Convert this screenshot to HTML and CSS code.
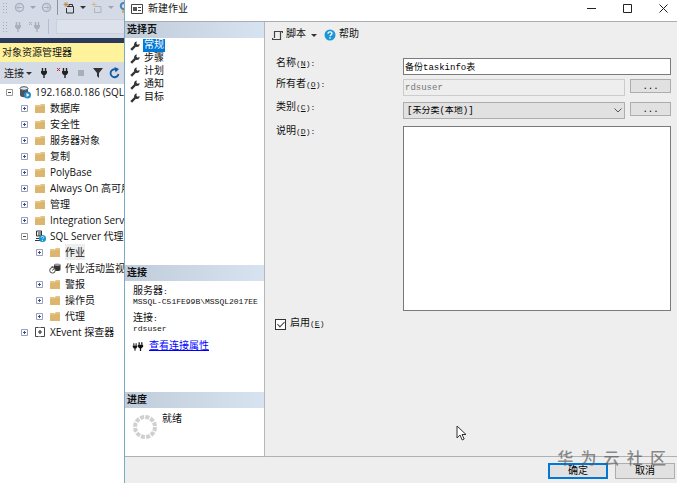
FILE: index.html
```html
<!DOCTYPE html>
<html lang="zh-CN">
<head>
  <meta charset="utf-8">
  <title>新建作业</title>
  <link rel="stylesheet" href="styles.css">
</head>
<body>

  <!-- shared icons -->
  <svg class="defs" width="0" height="0">
    <symbol id="folder" viewBox="0 0 12 11"><path d="M1 2h5l1-1h4v9H1z" fill="#dcb56f"/><path d="M1 3h5l1-1h4" fill="none" stroke="#eed29a"/></symbol>
    <symbol id="plus" viewBox="0 0 7 7"><path d="M.5.5h6v6h-6z" fill="#fff" stroke="#9a9fb5"/><path d="M2 3.5h3M3.5 2v3" stroke="#3b4a9c"/></symbol>
    <symbol id="minus" viewBox="0 0 7 7"><path d="M.5.5h6v6h-6z" fill="#fff" stroke="#999"/><path d="M2 3.5h3" stroke="#444"/></symbol>
    <symbol id="wrench" viewBox="0 0 10 10"><path d="M1.2 8.8L5.5 4.5" stroke="#333" stroke-width="2.4"/><path d="M6.8.6L6.4 2.8l1.2.9 2-.8c.1 2-1.3 3.3-3.2 3L4 3.8C4 1.8 5.3.5 6.8.6z" fill="#333"/></symbol>
    <symbol id="plug" viewBox="0 0 8 12"><path d="M2.5 1v3M5.5 1v3M4 7v4" stroke="currentColor" stroke-width="1.4"/><path d="M1 4h6v2L5.5 8h-3L1 6z" fill="currentColor"/></symbol>
  </svg>

  <div class="explorer">
    <div class="toolbar">
      <div class="tools">
        <span class="grip"></span>
        <svg class="back" width="11" height="11" viewBox="0 0 11 11"><circle cx="5.5" cy="5.5" r="4" fill="none" stroke="#a9afbd" stroke-width="1.5"/><path d="M8 5.5H3.5M5 3.5l-2 2 2 2" fill="none" stroke="#a9afbd"/></svg>
        <i class="caret pale"></i>
        <svg width="11" height="11" viewBox="0 0 11 11"><circle cx="5.5" cy="5.5" r="4" fill="none" stroke="#a9afbd" stroke-width="1.5"/><path d="M3 5.5h4.5M6 3.5l2 2-2 2" fill="none" stroke="#a9afbd"/></svg>
        <span class="sep"></span>
        <svg width="12" height="12" viewBox="0 0 12 12"><path d="M4 4.500h6.500v6.500h-7V6M6 4.500V2.500h3.500v2" fill="none" stroke="#333"/><path d="M3 0v5M.5 2.500h5M1.200.8l3.600 3.400M4.800.8L1.200 4.200" stroke="#bd8530" stroke-width=".8"/></svg>
        <i class="caret"></i>
        <svg width="12" height="12" viewBox="0 0 12 12"><path d="M4 4.500h6v6H3.500V6" fill="none" stroke="#aeb3be"/><path d="M3 0v5M.5 2.500h5" stroke="#d5b98e"/></svg>
        <i class="caret pale"></i>
        <svg width="8" height="11" viewBox="0 0 8 11"><path d="M7 2a3 3 0 1 0 0 4" fill="none" stroke="#4586b7" stroke-width="2"/><path d="M3 8h5v3H3z" fill="#d3ac67"/></svg>
      </div>
      <div class="tools second">
        <span class="grip"></span>
        <svg class="off" width="8" height="12"><use href="#plug"/></svg>
        <svg class="off" width="12" height="12" viewBox="0 0 12 12"><path d="M0 1l3 3M3 1L0 4" stroke="currentColor"/><use href="#plug" x="4" width="8" height="12"/></svg>
        <span class="sep pale"></span>
        <span class="well"></span>
      </div>
    </div>
    <div class="band"></div>
    <h2 class="caption">对象资源管理器</h2>
    <div class="connect">
      <span>连接</span><i class="caret"></i>
      <svg width="8" height="12"><use href="#plug"/></svg>
      <svg width="13" height="12" viewBox="0 0 13 12"><path d="M1 1l3 3M4 1L1 4" stroke="#c22"/><use href="#plug" x="5" width="8" height="12"/></svg>
      <svg width="8" height="8"><path d="M1 1h6v6H1z" fill="#a9aeb8"/></svg>
      <svg width="10" height="10" viewBox="0 0 10 10"><path d="M0 0h10L6 5v5L4 8V5z" fill="#333"/></svg>
      <svg width="11" height="12" viewBox="0 0 11 12"><path d="M9.500 7a4 4 0 1 1-2.500-4.500" fill="none" stroke="#12599f" stroke-width="1.800"/><path d="M5.500 0l4.500 2-3.500 3.500z" fill="#12599f"/></svg>
    </div>
    <ul class="tree">
      <li class="root"><svg width="7" height="7"><use href="#minus"/></svg>
        <svg width="12" height="13" viewBox="0 0 12 13"><path d="M1 2v7c0 3 8 3 8 0V2z" fill="#4c555d"/><ellipse cx="5" cy="2.500" rx="4" ry="1.800" fill="#e4e9ec" stroke="#4c555d"/><circle cx="8.500" cy="9" r="3.500" fill="#228dc9"/><path d="M7.500 7l3 2-3 2z" fill="#fff"/></svg>192.168.0.186 (SQL Server)</li>
      <li><svg width="7" height="7"><use href="#plus"/></svg><svg width="12" height="11"><use href="#folder"/></svg>数据库</li>
      <li><svg width="7" height="7"><use href="#plus"/></svg><svg width="12" height="11"><use href="#folder"/></svg>安全性</li>
      <li><svg width="7" height="7"><use href="#plus"/></svg><svg width="12" height="11"><use href="#folder"/></svg>服务器对象</li>
      <li><svg width="7" height="7"><use href="#plus"/></svg><svg width="12" height="11"><use href="#folder"/></svg>复制</li>
      <li><svg width="7" height="7"><use href="#plus"/></svg><svg width="12" height="11"><use href="#folder"/></svg>PolyBase</li>
      <li><svg width="7" height="7"><use href="#plus"/></svg><svg width="12" height="11"><use href="#folder"/></svg>Always On 高可用性</li>
      <li><svg width="7" height="7"><use href="#plus"/></svg><svg width="12" height="11"><use href="#folder"/></svg>管理</li>
      <li><svg width="7" height="7"><use href="#plus"/></svg><svg width="12" height="11"><use href="#folder"/></svg>Integration Services</li>
      <li><svg width="7" height="7"><use href="#minus"/></svg>
        <svg width="12" height="12" viewBox="0 0 12 12"><path d="M2.500 1h5v5h-5zM1 10.500h7M2 8.500h5" fill="#eee" stroke="#333"/><path d="M4 3h3M4 5h3" stroke="#333"/><circle cx="8.500" cy="8.500" r="3.500" fill="#1694d2"/><path d="M7.200 7.500c0-1.500 2.500-1.500 2.500 0 0 .8-1.200.8-1.200 1.800M8.500 10v1" fill="none" stroke="#fff" stroke-width=".8"/></svg>SQL Server 代理</li>
      <li class="sub"><svg width="7" height="7"><use href="#plus"/></svg><svg width="12" height="11"><use href="#folder"/></svg><span class="picked">作业</span></li>
      <li class="sub leaf"><svg width="12" height="11" viewBox="0 0 12 11"><path d="M5 1.500v5c0 2 6.500 2 6.500 0v-5z" fill="#333"/><ellipse cx="8.200" cy="1.800" rx="3" ry="1.300" fill="#999"/><circle cx="3.500" cy="7.300" r="2.800" fill="#fff" stroke="#444"/><path d="M3.500 7.500l1.200-1.700M2.500 3.800h2" stroke="#333"/></svg>作业活动监视器</li>
      <li class="sub"><svg width="7" height="7"><use href="#plus"/></svg><svg width="12" height="11"><use href="#folder"/></svg>警报</li>
      <li class="sub"><svg width="7" height="7"><use href="#plus"/></svg><svg width="12" height="11"><use href="#folder"/></svg>操作员</li>
      <li class="sub"><svg width="7" height="7"><use href="#plus"/></svg><svg width="12" height="11"><use href="#folder"/></svg>代理</li>
      <li><svg width="7" height="7"><use href="#plus"/></svg>
        <svg width="12" height="12" viewBox="0 0 12 12"><path d="M4 1.500H1.500v9H4M7 1.500h3.500v9H7" fill="none" stroke="#444"/><path d="M4 1.500h3M4 10.500h3" stroke="#888"/><path d="M4 6h4M6 4v4" stroke="#333" stroke-width="1.200"/></svg>XEvent 探查器</li>
    </ul>
  </div>

  <form class="dialog">
    <div class="title">
      <svg width="12" height="10" viewBox="0 0 12 10"><path d="M.5.5h11v9H.5z" fill="#fff" stroke="#444"/><path d="M2 3h4v4H2z" fill="#555"/><path d="M7 3.500h3M7 6.500h3" stroke="#444"/></svg>
      <h1>新建作业</h1>
      <button type="button" class="win" aria-label="最小化"><svg width="9" height="9"><path d="M0 4.500h9" stroke="#222"/></svg></button>
      <button type="button" class="win" aria-label="最大化"><svg width="9" height="9"><path d="M.5.5h8v8h-8z" fill="none" stroke="#222"/></svg></button>
      <button type="button" class="win" aria-label="关闭"><svg width="9" height="9"><path d="M.5.5l8 8M8.5.5l-8 8" stroke="#222"/></svg></button>
    </div>

    <div class="main">
      <div class="side">
        <div class="pages">
          <h3>选择页</h3>
          <ul>
            <li><svg width="10" height="10"><use href="#wrench"/></svg><span class="active">常规</span></li>
            <li><svg width="10" height="10"><use href="#wrench"/></svg><span>步骤</span></li>
            <li><svg width="10" height="10"><use href="#wrench"/></svg><span>计划</span></li>
            <li><svg width="10" height="10"><use href="#wrench"/></svg><span>通知</span></li>
            <li><svg width="10" height="10"><use href="#wrench"/></svg><span>目标</span></li>
          </ul>
        </div>
        <div class="conn">
          <h3>连接</h3>
          <dl>
            <dt>服务器<span class="lat">:</span></dt>
            <dd>MSSQL-C51FE99B\MSSQL2017EE</dd>
            <dt>连接<span class="lat">:</span></dt>
            <dd>rdsuser</dd>
          </dl>
          <div class="props">
            <svg width="12" height="12" viewBox="0 0 12 12"><use href="#plug" y="1" width="6" height="10"/><use href="#plug" x="5" width="7" height="11"/></svg>
            <a href="#">查看连接属性</a>
          </div>
        </div>
        <div class="progress">
          <h3>进度</h3>
          <div class="status">
            <svg width="24" height="24"><circle cx="12" cy="12" r="10" fill="none" stroke="#d0d0d0" stroke-width="4" stroke-dasharray="4 1.236"/></svg>
            <span>就绪</span>
          </div>
        </div>
      </div>

      <div class="content">
        <div class="actions">
          <svg width="11" height="11" viewBox="0 0 11 11"><path d="M2.500 8V1.500h8V3M8.500 2v7.500h-8V8" fill="none" stroke="#444" stroke-width="1.200"/></svg>
          <span>脚本</span><i class="caret"></i>
          <svg width="12" height="12" viewBox="0 0 12 12"><circle cx="6" cy="6" r="5.500" fill="#1c97d5"/><path d="M4 4.800c0-2.800 4-2.500 4-.3C8 6 6 5.800 6 7.300M6 8.300v1.400" fill="none" stroke="#fff" stroke-width="1.300"/></svg>
          <span>帮助</span>
        </div>

        <div class="fields">
          <label for="name">名称<span class="lat">(<u>N</u>):</span></label>
          <input type="text" id="name" class="wide" value="备份taskinfo表">

          <label for="owner">所有者<span class="lat">(<u>O</u>):</span></label>
          <input type="text" id="owner" value="rdsuser" disabled>
          <button type="button" class="more" aria-label="选择所有者">...</button>

          <label for="category">类别<span class="lat">(<u>C</u>):</span></label>
          <div class="select">
            <select id="category"><option>[未分类(本地)]</option></select>
            <svg width="8" height="5"><path d="M.5.5L4 4 7.5.5" fill="none" stroke="#555"/></svg>
          </div>
          <button type="button" class="more" aria-label="查看类别">...</button>

          <label for="desc">说明<span class="lat">(<u>D</u>):</span></label>
          <textarea id="desc" class="wide"></textarea>
        </div>

        <label class="enable"><input type="checkbox" checked><span>启用<span class="lat">(<u>E</u>)</span></span></label>
      </div>
    </div>

    <div class="footer">
      <button type="button" class="ok">确定</button>
      <button type="button">取消</button>
    </div>
  </form>

  <svg class="cursor" width="11" height="17" viewBox="0 0 11 17"><path d="M1 1v12l3-3 2.200 5 2-1L6 9.500h4z" fill="#fff" stroke="#333"/></svg>
  <div class="watermark">华  为  云  社  区</div>

</body>
</html>
```
FILE: styles.css
```css
* { box-sizing: border-box; margin: 0; padding: 0; }

body {
  display: flex;
  position: relative;
  min-height: 100vh;
  overflow: hidden;
  font-family: "Open Sans", "Noto Sans CJK SC", sans-serif;
  font-size: 10px;
  line-height: 16px;
  color: #111;
  background: #fff;
}

svg { display: block; flex: none; }
ul { list-style: none; }
h1, h2 { font-size: 10px; font-weight: normal; }
.defs { position: absolute; }

.caret {
  flex: none;
  border: 3px solid transparent;
  border-top-color: #333;
  border-bottom: 0;
}
.caret.pale { border-top-color: #9da3b2; }

/* object explorer */
.explorer {
  flex: 0 0 124px;
  overflow: hidden;
  white-space: nowrap;
}

.toolbar {
  height: 38px;
  background: #d5dae7;
}

.tools {
  display: flex;
  align-items: center;
  gap: 5px;
  height: 15px;
  padding-left: 2px;
}
.tools .back { margin-left: 2px; }
.tools.second { gap: 7px; height: 23px; }
.tools .off { color: #a9afbd; }

.grip {
  flex: none;
  width: 5px;
  height: 12px;
  background: radial-gradient(#a5abba 1px, transparent 1px) 0 0 / 3px 3px;
}

.sep {
  flex: none;
  width: 1px;
  height: 15px;
  background: #8c93a5;
}
.sep.pale { background: #b6bccb; }

.well {
  flex: 1;
  height: 15px;
  background: #dde1eb;
  border: 1px solid #ccd1dd;
  border-right: 0;
}

.band { height: 5px; background: #2b3a5c; }

.caption {
  height: 19px;
  padding-left: 2px;
  line-height: 19px;
  background: #fff29d;
}

.connect {
  display: flex;
  align-items: center;
  gap: 8px;
  height: 22px;
  padding-left: 4px;
  color: #222;
  background: #d5dae7;
}
.connect .caret { margin-left: -6px; }
.connect svg:last-child { margin-left: -2px; }

.tree li {
  display: flex;
  align-items: center;
  height: 16px;
  padding-left: 21px;
}
.tree li svg + svg { margin-left: 6px; }
.tree li svg:last-of-type { margin-right: 4px; }
.tree .root { padding-left: 6px; }
.tree .sub { padding-left: 36px; }
.tree .leaf { padding-left: 49px; }
.picked { background: #eee; }

/* dialog */
.dialog {
  flex: 1;
  display: flex;
  flex-direction: column;
  min-width: 0;
  border-left: 1px solid #7da9c9;
  font-family: "Liberation Mono", "Noto Sans CJK SC", monospace;
  background: #eee;
}

.title {
  display: flex;
  align-items: center;
  height: 22px;
  padding: 0 0 4px 6px;
  background: #fff;
  border-bottom: 1px solid #a9adb0;
}
.title h1 { flex: 1; margin-left: 5px; line-height: 14px; padding-top: 2px; }

.win {
  display: flex;
  align-items: center;
  justify-content: center;
  width: 36px;
  height: 16px;
  border: 0;
  background: none;
}
.win:last-child { margin-right: -4px; }

.main { flex: 1; display: flex; }

.side {
  flex: 0 0 140px;
  display: flex;
  flex-direction: column;
  border-right: 1px solid #b5b8bb;
  border-bottom: 1px solid #b0b0b0;
  background: #fff;
}

.side h3 {
  height: 16px;
  padding-left: 2px;
  font-size: 10px;
  line-height: 18px;
  background: linear-gradient(90deg, #c0ccda, #d7e3f1);
}

.pages { flex: 1; }
.pages ul { padding-top: 1px; }
.pages li {
  display: flex;
  align-items: center;
  gap: 3px;
  height: 13px;
  padding-left: 5px;
  line-height: 13px;
}
.pages span { padding: 0 1px; }
.pages .active { color: #fff; background: #0078d7; }

.conn { height: 127px; }
.conn dl { padding: 6px 0 0 8px; line-height: 10px; }
.conn dd { margin-bottom: 7px; font-size: 8px; white-space: nowrap; }

.props {
  display: flex;
  align-items: center;
  gap: 5px;
  margin-top: -2px;
  padding-left: 7px;
}
.props a { color: #00f; }

.progress { height: 64px; }
.status {
  display: flex;
  gap: 5px;
  padding: 4px 0 0 8px;
}
.status svg { margin-top: 3px; }

.content {
  flex: 1;
  min-width: 0;
  padding: 0 6px 0 10px;
  border-bottom: 1px solid #b0b0b0;
}

.actions {
  display: flex;
  align-items: center;
  height: 26px;
  margin-bottom: 10px;
}
.actions svg { margin-right: 3px; }
.actions .caret { margin: 0 7px 0 5px; }
.actions svg:first-child { margin-left: -3px; }

.lat { font-size: 8px; }

.fields {
  display: grid;
  grid-template-columns: 123px 1fr 41px;
  grid-template-rows: 21px 23px 24px 185px;
  column-gap: 5px;
  align-items: start;
}
.fields label { padding-left: 1px; line-height: 11px; }
.fields .wide { grid-column: 2 / 4; }

.fields input, select, textarea {
  width: 100%;
  height: 17px;
  padding-left: 1px;
  border: 1px solid #7a7a7a;
  border-radius: 0;
  font-family: inherit;
  font-size: 9px;
  color: #000;
  background: #fff;
}
.fields input:disabled { color: #777; border-color: #ccc; background: #eee; }
.fields textarea { display: block; height: 185px; resize: none; }

.select { position: relative; }
.select svg { position: absolute; right: 3px; top: 6px; }
select {
  display: block;
  padding-left: 3px;
  appearance: none;
  border-color: #adadad;
  background: #e1e1e1;
}

button {
  font-family: inherit;
  font-size: 10px;
  color: #000;
  background: #e1e1e1;
  border: 1px solid #adadad;
}
.more { height: 14px; padding-top: 3px; font-size: 9px; line-height: 9px; }

.enable {
  display: inline-flex;
  align-items: center;
  gap: 4px;
  margin-top: 5px;
}
.enable input {
  position: relative;
  appearance: none;
  width: 11px;
  height: 11px;
  border: 1px solid #333;
  background: #fff;
}
.enable input:checked::after {
  content: "";
  position: absolute;
  left: 3px;
  top: 0;
  width: 3px;
  height: 6px;
  border: solid #444;
  border-width: 0 1px 1px 0;
  transform: rotate(45deg);
}

.footer {
  display: flex;
  justify-content: flex-end;
  gap: 7px;
  height: 26px;
  padding: 6px 2px 0;
}
.footer button { width: 60px; height: 16px; padding-top: 2px; line-height: 12px; }
.footer .ok { border: 2px solid #0078d7; line-height: 10px; }

.cursor { position: absolute; right: 210px; bottom: 41px; }

.watermark {
  position: absolute;
  right: 11px;
  bottom: 16px;
  font-family: "Noto Sans CJK SC", sans-serif;
  font-size: 16px;
  font-weight: 500;
  line-height: 20px;
  white-space: pre;
  color: rgba(90, 90, 90, 0.7);
  pointer-events: none;
}
```
